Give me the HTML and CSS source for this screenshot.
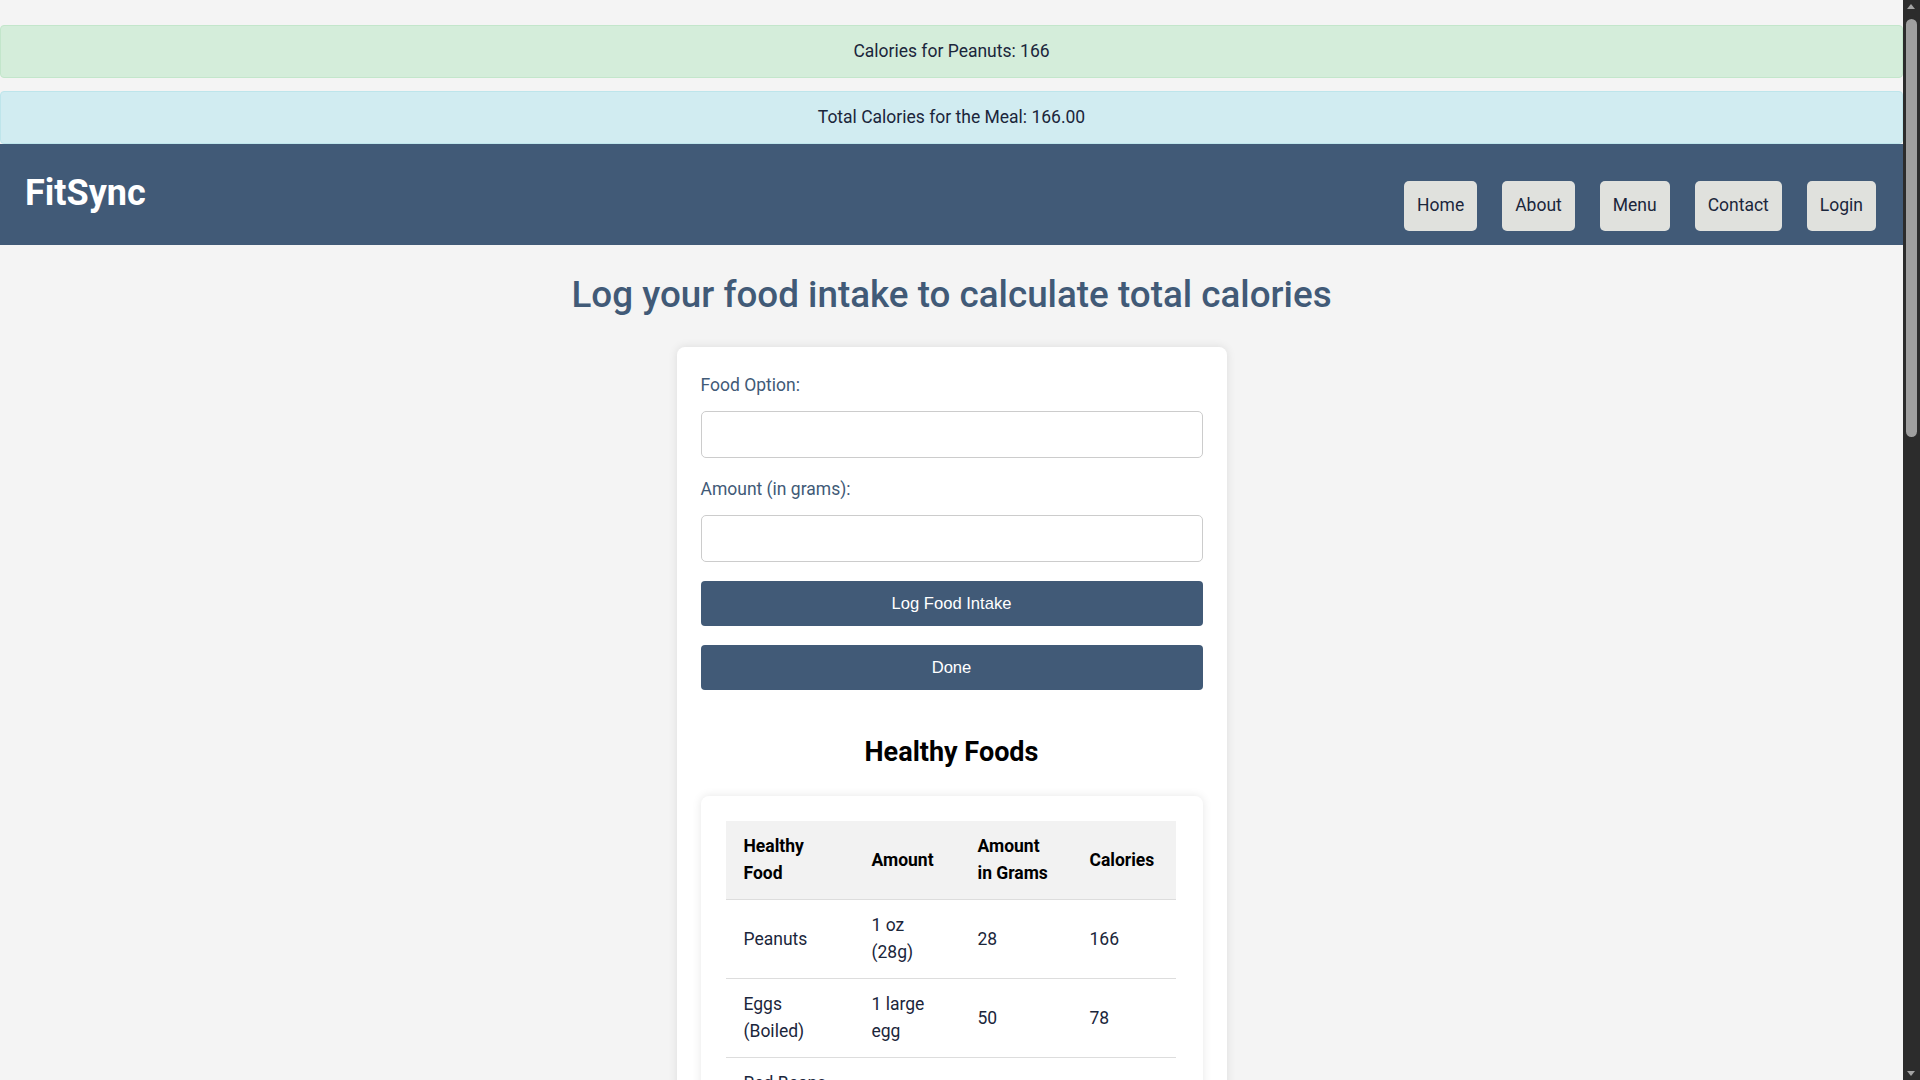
FILE: index.html
```html
<!DOCTYPE html>
<html lang="en">
<head>
<meta charset="utf-8">
<title>FitSync - Log Food Intake</title>
<link rel="stylesheet" href="styles.css">
</head>
<body>
<div class="page">
  <div class="alerts">
    <div class="alert alert-success">Calories for Peanuts: 166</div>
    <div class="alert alert-info">Total Calories for the Meal: 166.00</div>
  </div>
  <header class="navbar">
    <div class="logo">FitSync</div>
    <nav class="nav">
      <a class="nav-btn" href="#">Home</a>
      <a class="nav-btn" href="#">About</a>
      <a class="nav-btn" href="#">Menu</a>
      <a class="nav-btn" href="#">Contact</a>
      <a class="nav-btn" href="#">Login</a>
    </nav>
  </header>
  <main class="main">
    <h1 class="page-title">Log your food intake to calculate total calories</h1>
    <section class="card">
      <form class="food-form">
        <label class="field-label" for="food">Food Option:</label>
        <input class="field-input" id="food" type="text">
        <label class="field-label" for="amount">Amount (in grams):</label>
        <input class="field-input" id="amount" type="text">
        <button class="btn" type="button">Log Food Intake</button>
        <button class="btn" type="button">Done</button>
      </form>
      <h2 class="section-title">Healthy Foods</h2>
      <div class="table-card">
        <table class="food-table">
          <thead>
            <tr><th>Healthy Food</th><th>Amount</th><th>Amount in Grams</th><th>Calories</th></tr>
          </thead>
          <tbody>
            <tr><td>Peanuts</td><td>1 oz (28g)</td><td>28</td><td>166</td></tr>
            <tr><td>Eggs (Boiled)</td><td>1 large egg</td><td>50</td><td>78</td></tr>
            <tr><td>Red Beans (Cooked)</td><td>1/2 cup</td><td>89</td><td>112</td></tr>
            <tr><td>Oatmeal</td><td>1 cup</td><td>234</td><td>158</td></tr>
            <tr><td>Broccoli</td><td>1 cup</td><td>91</td><td>31</td></tr>
            <tr><td>Salmon</td><td>3 oz (85g)</td><td>85</td><td>177</td></tr>
          </tbody>
        </table>
      </div>
    </section>
  </main>
</div>
<div class="scrollbar" aria-hidden="true">
  <span class="sb-arrow sb-up"></span>
  <span class="sb-thumb"></span>
  <span class="sb-arrow sb-down"></span>
</div>
</body>
</html>
```
FILE: styles.css
```css
html, body {
  background: #f4f4f4;
}
body {
  margin: 0;
  font-family: Roboto, "Liberation Sans", sans-serif;
  font-size: 17.5px;
  line-height: 27px;
  color: #1b263b;
}
.page {
  margin-right: 17px;
}
.alerts {
  padding-top: 25px;
  display: flex;
  flex-direction: column;
  gap: 13px;
}
.alert {
  padding: 12px 20px;
  border: 1px solid transparent;
  border-radius: 4px;
  text-align: center;
  color: #1b263b;
}
.alert-success {
  background: #d4edda;
  border-color: #c3e6cb;
}
.alert-info {
  background: #d1ecf1;
  border-color: #bee5eb;
}
.navbar {
  height: 101px;
  background: #415a77;
  display: flex;
  justify-content: space-between;
  align-items: center;
  padding: 0 27px 0 25px;
}
.logo {
  color: #fff;
  font-size: 36px;
  line-height: 43px;
  font-weight: 700;
  margin-top: -2px;
}
.nav {
  align-self: flex-end;
  margin-bottom: 14px;
  display: flex;
  gap: 25px;
}
.nav-btn {
  display: block;
  background: #e0e1dd;
  color: #1b263b;
  text-decoration: none;
  padding: 11px 13px 12px;
  border-radius: 5px;
}
.main {
  display: flex;
  flex-direction: column;
  align-items: center;
}
.page-title {
  margin: 28px 0 31px;
  font-size: 36.8px;
  line-height: 43px;
  font-weight: 500;
  color: #415a77;
}
.card {
  width: 550px;
  box-sizing: border-box;
  background: #fff;
  border-radius: 8px;
  box-shadow: 0 0 10px rgba(0, 0, 0, 0.1);
  padding: 25px 24px 24px;
  margin-bottom: 40px;
}
.food-form {
  display: flex;
  flex-direction: column;
}
.field-label {
  color: #415a77;
  margin-bottom: 12px;
}
.field-input {
  height: 47px;
  box-sizing: border-box;
  border: 1px solid #ccc;
  border-radius: 5px;
  background: #fff;
  color: #1b263b;
  font: inherit;
  padding: 0 10px;
  margin-bottom: 18px;
}
.btn {
  height: 45px;
  border: none;
  border-radius: 4px;
  background: #415a77;
  color: #fff;
  font-family: "Liberation Sans", Arial, sans-serif;
  font-size: 16.6px;
  margin-top: 1px;
  margin-bottom: 18px;
}
.section-title {
  text-align: center;
  margin: 27px 0 27px;
  font-size: 27px;
  line-height: 34px;
  font-weight: 700;
  color: #000;
}
.table-card {
  background: #fff;
  border-radius: 8px;
  box-shadow: 0 0 10px rgba(0, 0, 0, 0.1);
  padding: 25px;
}
.food-table {
  width: 450px;
  table-layout: fixed;
  border-collapse: collapse;
}
.food-table th,
.food-table td {
  box-sizing: border-box;
  text-align: left;
  padding: 12px 18px;
  border-bottom: 1px solid #ddd;
  vertical-align: middle;
}
.food-table th {
  background: #f2f2f2;
  color: #000;
  font-weight: 700;
}
.food-table td {
  color: #1b263b;
}
.food-table th:nth-child(1) { width: 128px; }
.food-table th:nth-child(2) { width: 106px; }
.food-table th:nth-child(3) { width: 112px; }
.food-table th:nth-child(4) { width: 104px; }

.scrollbar {
  position: fixed;
  top: 0;
  right: 0;
  width: 17px;
  height: 100vh;
  background: #2c2c2c;
}
.sb-thumb {
  position: absolute;
  left: 3px;
  width: 11px;
  top: 19px;
  height: 418px;
  border-radius: 6px;
  background: #9f9f9f;
}
.sb-arrow {
  position: absolute;
  left: 4px;
  width: 0;
  height: 0;
  border-left: 4.5px solid transparent;
  border-right: 4.5px solid transparent;
}
.sb-up {
  top: 4px;
  border-bottom: 5px solid #a3a3a3;
}
.sb-down {
  bottom: 4px;
  border-top: 5px solid #a3a3a3;
}
```
